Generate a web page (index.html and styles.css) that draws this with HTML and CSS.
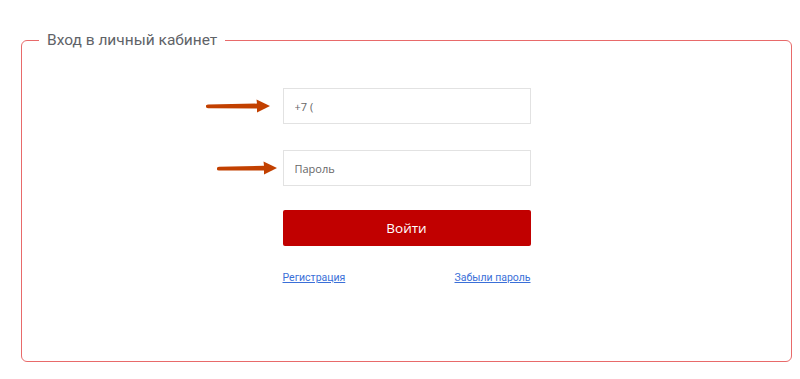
FILE: index.html
```html
<!DOCTYPE html>
<html lang="ru">
<head>
    <meta charset="UTF-8">
    <meta name="viewport" content="width=device-width, initial-scale=1.0">
    <title>Вход в личный кабинет</title>
    <link rel="stylesheet" href="styles.css">
</head>
<body>

    <fieldset class="login-box">
        <legend>Вход в личный кабинет</legend>

        <form class="login-form">
            <div class="field">
                <svg class="arrow arrow-phone" width="66" height="16" viewBox="0 0 66 16">
                    <path d="M1 7.6 Q1 6.6 3 6.4 L52 5.6 L51.5 1.5 L65 8 L52 14.5 L52 10.4 L3 10.2 Q1 10 1 9 Z" fill="#c24000"/>
                </svg>
                <input type="text" placeholder="+7 (">
            </div>
            <div class="field">
                <svg class="arrow arrow-pass" width="62" height="16" viewBox="0 0 62 16">
                    <path d="M1 8 Q1 7 3 6.8 L48 5.8 L47.5 1.5 L61 8 L48 14.5 L48 10.4 L3 10.6 Q1 10.4 1 9.4 Z" fill="#c24000"/>
                </svg>
                <input type="password" placeholder="Пароль">
            </div>
            <button type="button">Войти</button>
            <div class="links">
                <a href="#">Регистрация</a>
                <a href="#">Забыли пароль</a>
            </div>
        </form>
    </fieldset>

</body>
</html>
```

FILE: styles.css
```css
body {
    margin: 0;
    padding: 30px 8px 0 21px;
    background-color: #fff;
    font-family: Roboto, "Open Sans", Arial, sans-serif;
}

.login-box {
    width: 771px;
    box-sizing: border-box;
    margin: 0;
    padding: 0 0 77px;
    border: 1px solid #e86a6a;
    border-radius: 6px;
}

.login-box legend {
    margin-left: 17px;
    padding: 0 8px;
    font-size: 15.5px;
    line-height: 20px;
    color: #5f6368;
}

.login-form {
    width: 248px;
    margin: 38px auto 0;
}

.field {
    position: relative;
    margin-bottom: 26px;
}

.field + .field {
    margin-bottom: 24px;
}

/* arrows pointing at the inputs */
.arrow {
    position: absolute;
    top: 10px;
}

.arrow-phone {
    left: -78px;
}

.arrow-pass {
    left: -67px;
}

input {
    display: block;
    width: 100%;
    height: 36px;
    box-sizing: border-box;
    padding: 0 11px;
    border: 1px solid #e2e2e2;
    font-family: "Open Sans", Arial, sans-serif;
    font-size: 11px;
    color: #555;
    outline: none;
}

input::placeholder {
    color: #666;
}

button {
    display: block;
    width: 100%;
    height: 36px;
    border: none;
    border-radius: 2px;
    background-color: #c10000;
    color: #fff;
    font-family: "Open Sans", Arial, sans-serif;
    font-size: 13.5px;
    cursor: pointer;
}

.links {
    display: flex;
    justify-content: space-between;
    margin-top: 26px;
}

.links a {
    font-family: Roboto, Arial, sans-serif;
    font-size: 10.5px;
    line-height: 12px;
    color: #3a6fd8;
}
```
